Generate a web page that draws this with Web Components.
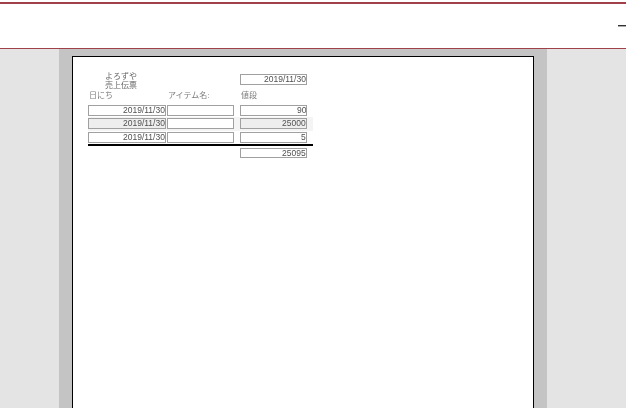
<!DOCTYPE html>
<html lang="ja">
<head>
<meta charset="utf-8">
<title>売上伝票</title>
<style>
  html, body { margin: 0; height: 100%; overflow: hidden; }
  body { font-family: "Liberation Sans", "Noto Sans CJK JP", sans-serif; }
</style>
</head>
<body>
<report-shell>
  <report-paper>
    <report-title slot="head">よろずや<br>売上伝票</report-title>
    <report-field slot="date" value="2019/11/30"></report-field>
    <report-row head a="日にち" b="アイテム名:" c="値段"></report-row>
    <report-row a="2019/11/30" c="90"></report-row>
    <report-row shaded a="2019/11/30" c="25000"></report-row>
    <report-row last a="2019/11/30" c="5"></report-row>
    <report-total value="25095"></report-total>
  </report-paper>
</report-shell>

<script>
(function () {
    const GOTHIC = '"Liberation Sans", "Noto Sans CJK JP", sans-serif';

    class ReportShell extends HTMLElement {
        constructor() {
            super();
            this.attachShadow({ mode: "open" }).innerHTML = `
            <style>
                :host { display: flex; flex-direction: column; height: 100vh; background: #e4e4e4; overflow: hidden; }
                .bar {
                    flex: none;
                    box-sizing: border-box;
                    height: 49px;
                    padding-top: 2px;
                    background: #fff;
                    display: flex;
                    flex-direction: column;
                }
                .stripe { height: 2px; background: #a04048; }
                .tools { flex: 1; display: flex; justify-content: flex-end; align-items: center; }
                .dash { width: 8px; height: 2px; background: linear-gradient(#333 50%, #aaa 50%); }
                .rule { height: 1px; background: #a04048; }
                .viewer { flex: 1; display: flex; justify-content: center; min-height: 0; padding-right: 20px; }
                .gutter { box-sizing: border-box; width: 488px; padding: 7px 13px 0; background: #c4c4c4; }
            </style>
            <div class="bar">
                <div class="stripe"></div>
                <div class="tools"><div class="dash"></div></div>
                <div class="rule"></div>
            </div>
            <div class="viewer"><div class="gutter"><slot></slot></div></div>
            `;
        }
    }

    class ReportPaper extends HTMLElement {
        constructor() {
            super();
            this.attachShadow({ mode: "open" }).innerHTML = `
            <style>
                :host {
                    display: block;
                    box-sizing: border-box;
                    height: 600px;
                    padding: 17px 0 0 15px;
                    background: #fff;
                    border: 1px solid #000;
                }
                .top { display: grid; grid-template-columns: 152px 67px; height: 17px; }
                .sheet { width: 225px; }
            </style>
            <div class="top">
                <slot name="head"></slot>
                <slot name="date"></slot>
            </div>
            <div class="sheet"><slot></slot></div>
            `;
        }
    }

    class ReportTitle extends HTMLElement {
        constructor() {
            super();
            this.attachShadow({ mode: "open" }).innerHTML = `
            <style>
                :host {
                    display: block;
                    margin-top: -1px;
                    padding-left: 17px;
                    font: 8px/8.5px ${GOTHIC};
                    color: #666;
                    will-change: transform;
                }
            </style>
            <slot></slot>
            `;
        }
    }

    class ReportField extends HTMLElement {
        constructor() {
            super();
            this.attachShadow({ mode: "open" }).innerHTML = `
            <style>
                :host {
                    display: block;
                    box-sizing: border-box;
                    height: 11px;
                    border: 1px solid #a0a0a0;
                    background: #fff;
                    text-align: right;
                    font: 8.5px/9px ${GOTHIC};
                    color: #505050;
                    overflow: hidden;
                    white-space: nowrap;
                }
                :host([shaded]) { background: #eeeeee; }
                span { display: inline-block; will-change: transform; vertical-align: top; }
            </style>
            <span></span>
            `;
        }

        set value(text) {
            this.shadowRoot.querySelector("span").textContent = text;
        }

        connectedCallback() {
            if (this.hasAttribute("value")) this.value = this.getAttribute("value");
        }
    }

    class ReportRow extends HTMLElement {
        constructor() {
            super();
            this.attachShadow({ mode: "open" }).innerHTML = `
            <style>
                :host {
                    display: grid;
                    grid-template-columns: 79px 67px 79px;
                    height: 13px;
                    padding-bottom: 2px;
                    box-sizing: border-box;
                }
                :host([shaded]) { height: 14px; padding: 1px 0 2px; margin-top: -1px; background: #f4f4f4; }
                :host([last]) { height: 11px; margin-top: 1px; padding: 0; }
                :host([head]) { height: 14px; padding: 0; }
                .label { font: 8px/10px ${GOTHIC}; color: #808080; padding-left: 1px; white-space: nowrap; will-change: transform; }
                report-field.a { margin-right: 1px; }
                report-field.c { margin: 0 6px; }
                .label.c { padding-left: 7px; }
            </style>
            <div class="cells" style="display: contents"></div>
            `;
        }

        connectedCallback() {
            const cells = this.shadowRoot.querySelector(".cells");
            const shaded = this.hasAttribute("shaded");
            ["a", "b", "c"].forEach((key) => {
                const value = this.getAttribute(key) || "";
                if (this.hasAttribute("head")) {
                    const label = document.createElement("div");
                    label.className = "label " + key;
                    label.textContent = value;
                    cells.appendChild(label);
                    return;
                }
                const field = document.createElement("report-field");
                field.className = key;
                field.setAttribute("value", value);
                if (shaded && key !== "b") field.setAttribute("shaded", "");
                cells.appendChild(field);
            });
        }
    }

    class ReportTotal extends HTMLElement {
        constructor() {
            super();
            this.attachShadow({ mode: "open" }).innerHTML = `
            <style>
                :host { display: block; }
                .line { height: 2px; background: #000; margin: 1px 0 2px; }
                .wrap { padding-left: 152px; width: 67px; }
                report-field { height: 10px; }
            </style>
            <div class="line"></div>
            <div class="wrap"><report-field></report-field></div>
            `;
        }

        connectedCallback() {
            this.shadowRoot.querySelector("report-field").value = this.getAttribute("value") || "";
        }
    }

    customElements.define("report-field", ReportField);
    customElements.define("report-shell", ReportShell);
    customElements.define("report-paper", ReportPaper);
    customElements.define("report-title", ReportTitle);
    customElements.define("report-row", ReportRow);
    customElements.define("report-total", ReportTotal);
})();
</script>
</body>
</html>
